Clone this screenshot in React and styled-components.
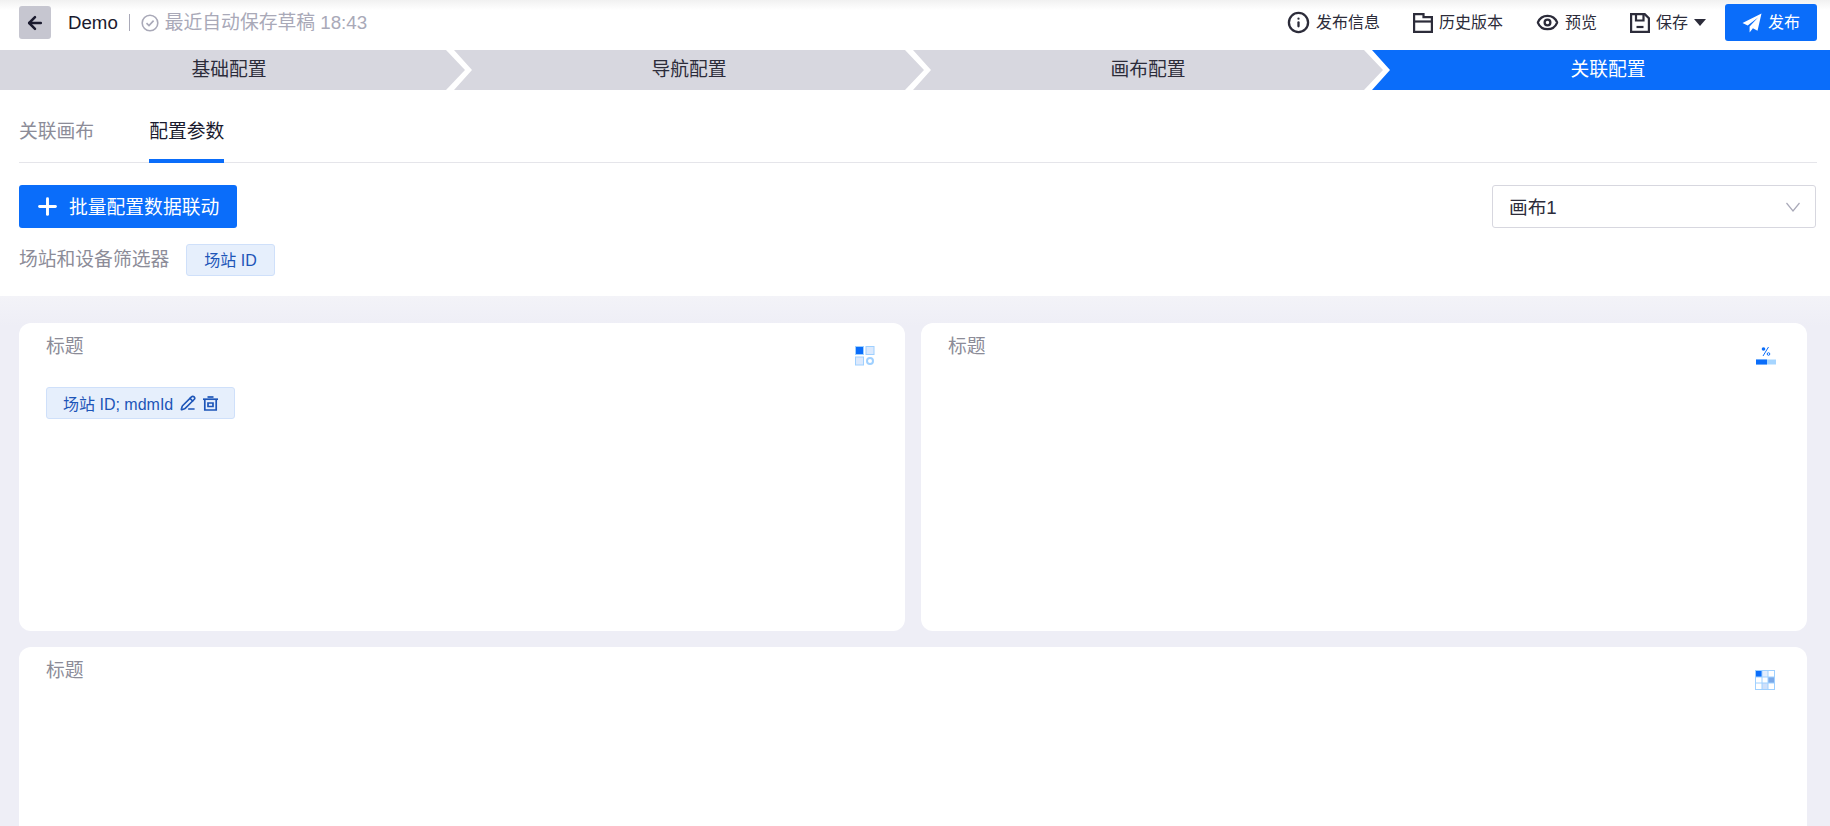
import React from "react";
import styled, {createGlobalStyle} from "styled-components";
import {ArrowLeft, Eye, Info, Plus, PencilLine} from "lucide-react";

const GlobalStyle = createGlobalStyle`
  html, body {
    margin: 0;
    padding: 0;
    height: 100%;
    overflow: hidden;
    background: #fff;
    font-family: "Liberation Sans", "Noto Sans CJK SC", sans-serif;
  }
`;

const FolderIcon = () => (
    <svg width="20" height="20" viewBox="0 0 20 20" fill="none" stroke="#2c2c3a" strokeWidth="2.2">
        <path d="M1.1 1.1h9.4v3h8.4v14.8H1.1z"/>
        <path d="M1 8.5h18"/>
    </svg>
);

const SaveIcon = () => (
    <svg width="20" height="20" viewBox="0 0 20 20" fill="none" stroke="#2c2c3a" strokeWidth="2.2">
        <path d="M1.1 1.1h13.6l4.2 4.2v13.6H1.1z"/>
        <path d="M6 1v6.5h7.5V1"/>
        <path d="M6.5 14h7"/>
    </svg>
);

const PlaneIcon = () => (
    <svg width="20" height="20" viewBox="0 0 20 20" fill="#fff">
        <path d="M19.5 0.5 0.5 10l5.2 2.6L16 4.5 7.6 13.6v5.9l3.3-4.2 4.6 2.4z"/>
    </svg>
);

const TrashIcon = () => (
    <svg width="15" height="15" viewBox="0 0 15 15" fill="none" stroke="#1d55b8" strokeWidth="1.7">
        <path d="M0 3.2h15"/>
        <path d="M4.5 1h6"/>
        <path d="M1.8 3.2v10.8h11.4V3.2"/>
        <path d="M5 7h5v3.5H5z"/>
    </svg>
);

const GridIcon = () => (
    <svg width="20" height="20" viewBox="0 0 20 20">
        <rect x="0.5" y="0.5" width="8" height="8" fill="#0a6dfa" stroke="#9fd0ff"/>
        <rect x="11" y="0.5" width="8" height="8" fill="#dbe9fd" stroke="#9fd0ff"/>
        <rect x="0.5" y="11" width="8" height="8" fill="#dbe9fd" stroke="#9fd0ff"/>
        <circle cx="15" cy="15" r="3" fill="#fff" stroke="#9fd0ff" strokeWidth="2"/>
    </svg>
);

const PercentIcon = () => (
    <svg width="20" height="20" viewBox="0 0 20 20">
        <circle cx="7.5" cy="3" r="1.8" fill="#0a6dfa"/>
        <circle cx="12.5" cy="8" r="1.3" fill="none" stroke="#0a6dfa"/>
        <path d="M12.5 1 7 10" stroke="#0a6dfa" strokeWidth="1"/>
        <rect x="0" y="13.5" width="20" height="5" fill="#a6d5ff"/>
        <rect x="0" y="13.5" width="11" height="5" fill="#0a6dfa"/>
    </svg>
);

const TableIcon = () => (
    <svg width="20" height="20" viewBox="0 0 20 20">
        <rect x="0.5" y="0.5" width="19" height="19" fill="#fff" stroke="#9fd0ff"/>
        <rect x="1" y="1" width="6" height="6" fill="#0a6dfa"/>
        <rect x="7" y="1" width="6" height="6" fill="#e3edfc"/>
        <rect x="13" y="7" width="6" height="6" fill="#7aa8e8"/>
        <rect x="7" y="13" width="6" height="6" fill="#cfe0fa"/>
        <path d="M7 1v18M13 1v18M1 7h18M1 13h18" stroke="#9fd0ff" strokeWidth="1"/>
    </svg>
);

const actions = [
    {label: "发布信息", icon: <Info size={23} color="#2c2c3a" strokeWidth={2.4}/>},
    {label: "历史版本", icon: <FolderIcon/>},
    {label: "预览", icon: <Eye size={23} color="#2c2c3a" strokeWidth={2.4}/>},
];

const steps = [
    {label: "基础配置", width: 465},
    {label: "导航配置", width: 470},
    {label: "画布配置", width: 470},
    {label: "关联配置", active: true},
];

export default function App() {
    return (
        <Page>
            <GlobalStyle/>
            <Header>
                <BackButton><ArrowLeft size={20} color="#1a1a2e" strokeWidth={3}/></BackButton>
                <AppName>Demo</AppName>
                <Divider/>
                <SaveState>
                    <CheckCircle viewBox="0 0 18 18" fill="none" stroke="#a9a9b8" strokeWidth="1.6">
                        <circle cx="9" cy="9" r="7.8"/>
                        <path d="M5.5 9.2 8 11.6l4.6-5"/>
                    </CheckCircle>
                    <SaveText>最近自动保存草稿 18:43</SaveText>
                </SaveState>
                <Actions>
                    {actions.map((item) => (
                        <Action key={item.label}>{item.icon}<ActionLabel>{item.label}</ActionLabel></Action>
                    ))}
                    <Action>
                        <SaveIcon/>
                        <ActionLabel>保存</ActionLabel>
                        <Caret/>
                    </Action>
                    <PublishButton><PlaneIcon/><ActionLabel>发布</ActionLabel></PublishButton>
                </Actions>
            </Header>
            <Steps>
                {steps.map((step, index) => (
                    <Step key={step.label} $first={index === 0} $active={step.active} $width={step.width}>
                        {step.label}
                    </Step>
                ))}
            </Steps>
            <TopPanel>
                <Tabs>
                    <Tab>关联画布</Tab>
                    <Tab $active>配置参数</Tab>
                </Tabs>
                <Toolbar>
                    <AddButton><Plus size={27} color="#fff" strokeWidth={2.6}/><ButtonText>批量配置数据联动</ButtonText></AddButton>
                    <Select>
                        <ButtonText>画布1</ButtonText>
                        <svg width="14" height="10" viewBox="0 0 14 10" fill="none" stroke="#a9a9b8" strokeWidth="1.2">
                            <path d="M0.5 1 7 9l6.5-8"/>
                        </svg>
                    </Select>
                </Toolbar>
                <FilterRow>
                    <FilterLabel>场站和设备筛选器</FilterLabel>
                    <Tag>场站 ID</Tag>
                </FilterRow>
            </TopPanel>
            <Board>
                <Card>
                    <CardHead>
                        <CardTitle>标题</CardTitle>
                        <CardIcon $right={3}><GridIcon/></CardIcon>
                    </CardHead>
                    <CardTag>
                        <span>场站 ID; mdmId</span>
                        <PencilLine size={16} color="#1d55b8" strokeWidth={2.4}/>
                        <TrashIcon/>
                    </CardTag>
                </Card>
                <Card>
                    <CardHead>
                        <CardTitle>标题</CardTitle>
                        <CardIcon $right={4}><PercentIcon/></CardIcon>
                    </CardHead>
                </Card>
                <WideCard>
                    <CardHead>
                        <CardTitle>标题</CardTitle>
                        <CardIcon $right={5}><TableIcon/></CardIcon>
                    </CardHead>
                </WideCard>
            </Board>
        </Page>
    );
}

const Page = styled.div`
  height: 826px;
  overflow: hidden;
  display: flex;
  flex-direction: column;
  color: #1a1a2e;
`;
const Header = styled.div`
  height: 50px;
  box-sizing: border-box;
  display: flex;
  align-items: center;
  padding: 0 13px 5px 19px;
  border-left: 1px solid #ddd;
  background: linear-gradient(#f1f1f1, #fff 10px);
  margin-left: -1px;
`;
const BackButton = styled.div`
  width: 32px;
  height: 33px;
  border-radius: 3px;
  background: #c6c6d0;
  display: flex;
  align-items: center;
  justify-content: center;
`;
const AppName = styled.div`
  margin-left: 17px;
  font-size: 18.67px;
  color: #1a1a2e;
`;
const Divider = styled.div`
  width: 1px;
  height: 17px;
  background: #a9a9b8;
  margin: 0 11px;
`;
const SaveState = styled.div`
  display: flex;
  align-items: center;
  gap: 6px;
  font-size: 18.8px;
  color: #a9a9b8;
`;
const SaveText = styled.span`
  padding-bottom: 4px;
`;
const CheckCircle = styled.svg`
  width: 18px;
  height: 18px;
`;
const Actions = styled.div`
  margin-left: auto;
  display: flex;
  align-items: center;
  gap: 33px;
`;
const Action = styled.div`
  display: flex;
  align-items: center;
  gap: 6px;
  font-size: 16px;
  color: #2c2c3a;
`;
const ActionLabel = styled.span`
  padding-bottom: 3px;
`;
const Caret = styled.span`
  width: 0;
  height: 0;
  border-left: 6px solid transparent;
  border-right: 6px solid transparent;
  border-top: 7px solid #2c2c3a;
`;
const PublishButton = styled.div`
  width: 92px;
  height: 37px;
  margin-left: -14px;
  box-sizing: border-box;
  display: flex;
  align-items: center;
  justify-content: center;
  gap: 6px;
  border-radius: 3px;
  background: #0a6dfa;
  color: #fff;
  font-size: 16px;
`;
const Steps = styled.div`
  height: 40px;
  display: flex;
`;
const Step = styled.div`
  box-sizing: border-box;
  flex: ${(p) => (p.$width ? `0 0 ${p.$width}px` : "1")};
  margin-left: ${(p) => (p.$first ? "0" : "-11px")};
  padding-left: ${(p) => (p.$active ? "14px" : "0")};
  padding-right: ${(p) => (p.$first ? "7px" : "0")};
  padding-bottom: 6px;
  display: flex;
  align-items: center;
  justify-content: center;
  font-size: 18.8px;
  background: ${(p) => (p.$active ? "#0a6dfa" : "#d7d7df")};
  color: ${(p) => (p.$active ? "#fff" : "#2c2c3a")};
  clip-path: ${(p) => {
    if (p.$first) return "polygon(0 0, calc(100% - 19px) 0, 100% 50%, calc(100% - 19px) 100%, 0 100%)";
    if (p.$active) return "polygon(0 0, 100% 0, 100% 100%, 0 100%, 18px 50%)";
    return "polygon(0 0, calc(100% - 19px) 0, 100% 50%, calc(100% - 19px) 100%, 0 100%, 18px 50%)";
  }};
`;
const TopPanel = styled.div`
  height: 206px;
  box-sizing: border-box;
  padding: 0 13px 0 19px;
  border-left: 1px solid #ddd;
  margin-left: -1px;
  background: #fff;
`;
const Tabs = styled.div`
  height: 73px;
  box-sizing: border-box;
  display: flex;
  align-items: flex-end;
  gap: 55px;
  border-bottom: 1px solid #e5e5ea;
`;
const Tab = styled.div`
  height: 43px;
  margin-bottom: -1px;
  box-sizing: border-box;
  font-size: 18.8px;
  line-height: 24px;
  color: ${(p) => (p.$active ? "#1a1a2e" : "#8c8c98")};
  border-bottom: 4px solid ${(p) => (p.$active ? "#0a6dfa" : "transparent")};
`;
const Toolbar = styled.div`
  margin-top: 22px;
  display: flex;
  justify-content: space-between;
  align-items: center;
`;
const ButtonText = styled.span`
  padding-bottom: 2px;
`;
const AddButton = styled.div`
  width: 218px;
  height: 43px;
  box-sizing: border-box;
  padding-left: 15px;
  display: flex;
  align-items: center;
  gap: 8px;
  border-radius: 3px;
  background: #0a6dfa;
  color: #fff;
  font-size: 18.8px;
`;
const Select = styled.div`
  width: 324px;
  height: 43px;
  box-sizing: border-box;
  margin-right: 1px;
  padding: 0 15px 0 16px;
  display: flex;
  align-items: center;
  justify-content: space-between;
  border: 1px solid #d7d7df;
  border-radius: 3px;
  font-size: 18.67px;
  color: #2c2c3a;
`;
const FilterRow = styled.div`
  margin-top: 16px;
  display: flex;
  align-items: center;
  gap: 17px;
`;
const FilterLabel = styled.div`
  font-size: 18.8px;
  line-height: 32px;
  color: #8c8c98;
`;
const Tag = styled.div`
  height: 32px;
  box-sizing: border-box;
  padding: 0 17px 3px;
  display: flex;
  align-items: center;
  border: 1px solid #cfe0fa;
  border-radius: 3px;
  background: #e6effc;
  color: #1d55b8;
  font-size: 16px;
`;
const Board = styled.div`
  flex: 1;
  min-height: 0;
  box-sizing: border-box;
  padding: 27px 23px 0 19px;
  display: grid;
  grid-template-columns: 1fr 1fr;
  grid-template-rows: 308px 1fr;
  gap: 16px;
  background: linear-gradient(#f3f3f8, #eeeef6 30px);
`;
const Card = styled.div`
  box-sizing: border-box;
  padding: 11px 27px;
  border-radius: 12px;
  background: #fff;
`;
const WideCard = styled(Card)`
  grid-column: 1 / 3;
  min-height: 300px;
`;
const CardHead = styled.div`
  display: flex;
  justify-content: space-between;
  align-items: flex-start;
`;
const CardTitle = styled.div`
  font-size: 18.8px;
  line-height: 26px;
  color: #8c8c98;
`;
const CardIcon = styled.div`
  margin-top: 12px;
  height: 20px;
  margin-right: ${(p) => p.$right}px;
`;
const CardTag = styled(Tag)`
  display: inline-flex;
  margin-top: 21px;
  padding: 0 0 0 16px;
  width: 189px;
  gap: 7px;
`;
